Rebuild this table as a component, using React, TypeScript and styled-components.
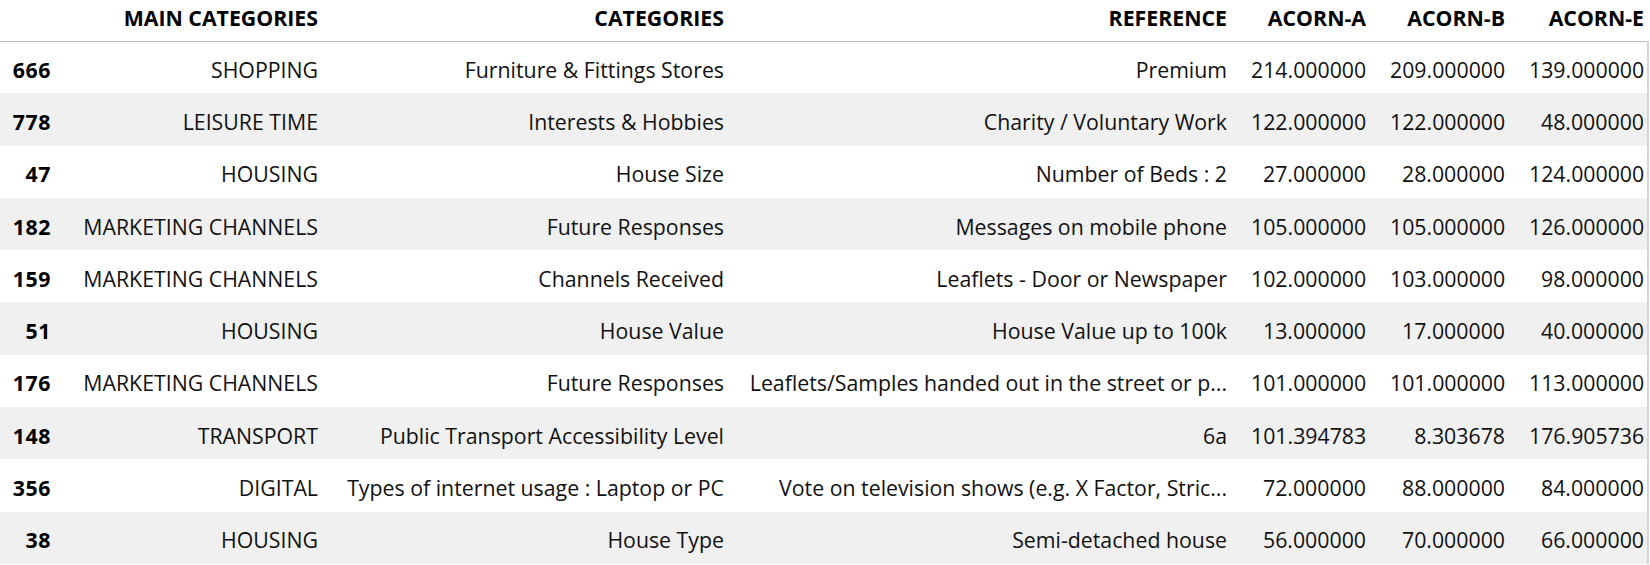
import React from 'react';
import styled, {createGlobalStyle} from 'styled-components';

const GlobalStyle = createGlobalStyle`
    html, body {
        margin: 0;
        padding: 0;
        background-color: white;
        font-family: "Open Sans", "Noto Sans", sans-serif;
    }
`;

type RowType = {
    index: number;
    main: string;
    category: string;
    reference: string;
    acornA: string;
    acornB: string;
    acornE: string;
};

const columns: {label: string, width: number}[] = [
    {label: '', width: 64},
    {label: 'MAIN CATEGORIES', width: 266},
    {label: 'CATEGORIES', width: 406},
    {label: 'REFERENCE', width: 503},
    {label: 'ACORN-A', width: 139},
    {label: 'ACORN-B', width: 139},
    {label: 'ACORN-E', width: 131},
];

const rows: RowType[] = [
    {index: 666, main: 'SHOPPING', category: 'Furniture & Fittings Stores', reference: 'Premium', acornA: '214.000000', acornB: '209.000000', acornE: '139.000000'},
    {index: 778, main: 'LEISURE TIME', category: 'Interests & Hobbies', reference: 'Charity / Voluntary Work', acornA: '122.000000', acornB: '122.000000', acornE: '48.000000'},
    {index: 47, main: 'HOUSING', category: 'House Size', reference: 'Number of Beds : 2', acornA: '27.000000', acornB: '28.000000', acornE: '124.000000'},
    {index: 182, main: 'MARKETING CHANNELS', category: 'Future Responses', reference: 'Messages on mobile phone', acornA: '105.000000', acornB: '105.000000', acornE: '126.000000'},
    {index: 159, main: 'MARKETING CHANNELS', category: 'Channels Received', reference: 'Leaflets - Door or Newspaper', acornA: '102.000000', acornB: '103.000000', acornE: '98.000000'},
    {index: 51, main: 'HOUSING', category: 'House Value', reference: 'House Value up to 100k', acornA: '13.000000', acornB: '17.000000', acornE: '40.000000'},
    {index: 176, main: 'MARKETING CHANNELS', category: 'Future Responses', reference: 'Leaflets/Samples handed out in the street or p...', acornA: '101.000000', acornB: '101.000000', acornE: '113.000000'},
    {index: 148, main: 'TRANSPORT', category: 'Public Transport Accessibility Level', reference: '6a', acornA: '101.394783', acornB: '8.303678', acornE: '176.905736'},
    {index: 356, main: 'DIGITAL', category: 'Types of internet usage : Laptop or PC', reference: 'Vote on television shows (e.g. X Factor, Stric...', acornA: '72.000000', acornB: '88.000000', acornE: '84.000000'},
    {index: 38, main: 'HOUSING', category: 'House Type', reference: 'Semi-detached house', acornA: '56.000000', acornB: '70.000000', acornE: '66.000000'},
];

const App: React.FunctionComponent = () => {
    return (
        <>
            <GlobalStyle/>
            <Frame>
                <Table>
                    <colgroup>
                        {columns.map((column, i) => (
                            <col key={i} style={{width: column.width}}/>
                        ))}
                    </colgroup>
                    <thead>
                        <tr>
                            {columns.map((column, i) => (
                                <HeadCell key={i} $last={i === columns.length - 1}>{column.label}</HeadCell>
                            ))}
                        </tr>
                    </thead>
                    <tbody>
                        {rows.map((row, i) => (
                            <Row key={row.index} $striped={i % 2 === 1}>
                                <IndexCell>{row.index}</IndexCell>
                                <Cell>{row.main}</Cell>
                                <Cell>{row.category}</Cell>
                                <Cell>{row.reference}</Cell>
                                <Cell>{row.acornA}</Cell>
                                <Cell>{row.acornB}</Cell>
                                <Cell $last>{row.acornE}</Cell>
                            </Row>
                        ))}
                    </tbody>
                </Table>
            </Frame>
        </>
    );
}

const Frame = styled.div`
    width: 1650px;
    height: 565px;
    overflow: hidden;
`;

const Table = styled.table`
    width: 1648px;
    table-layout: fixed;
    border-collapse: collapse;
    border-spacing: 0;
    color: #111;
    font-size: 21.3px;
`;

const HeadCell = styled.th<{$last?: boolean}>`
    height: 41px;
    padding: 0 ${props => props.$last ? '4px' : '12px'} 5px 12px;
    text-align: right;
    font-weight: 700;
    color: #000;
    white-space: nowrap;
    border-bottom: 1px solid #bdbdbd;
    box-sizing: border-box;
`;

const Row = styled.tr<{$striped: boolean}>`
    height: 52.3px;
    background-color: ${props => props.$striped ? '#f0f0f0' : 'white'};
`;

const Cell = styled.td<{$last?: boolean}>`
    padding: 4px ${props => props.$last ? '3px' : '12px'} 0 12px;
    text-align: right;
    white-space: nowrap;
    overflow: hidden;
    border-right: ${props => props.$last ? '2px solid #d4d4d4' : 'none'};
`;

const IndexCell = styled(Cell)`
    font-weight: 700;
    color: #000;
    letter-spacing: 0.6px;
    padding-left: 0;
    padding-right: 13px;
`;

export default App;
